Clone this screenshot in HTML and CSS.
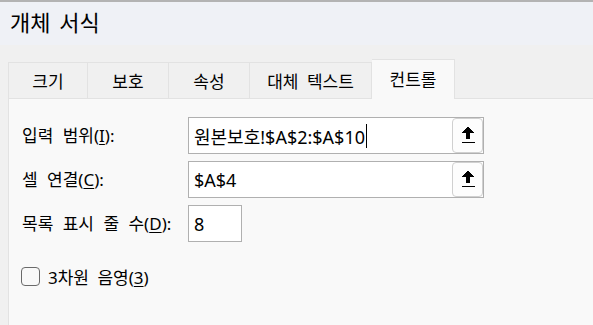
FILE: index.html
```html
<!DOCTYPE html>
<html lang="ko">
<head>
<meta charset="utf-8">
<link rel="stylesheet" href="styles.css">
</head>
<body>
<div class="topbar"></div>
<div class="titlebar">개체 서식</div>
<div class="dialog">
  <div class="tabs">
    <div class="tab t1">크기</div>
    <div class="tab t2">보호</div>
    <div class="tab t3">속성</div>
    <div class="tab t4">대체 텍스트</div>
    <div class="tab active">컨트롤</div>
  </div>
  <div class="panel">
    <div class="form">
      <div class="label">입력 범위(<u>I</u>):</div>
      <div class="field wide"><span class="value">원본보호!$A$2:$A$10<span class="caret"></span></span>
        <span class="btn"><svg class="arrow" width="14" height="18" viewBox="0 0 14 18"><path d="M7 0 L13.5 7 L9 7 L9 13 L5 13 L5 7 L0.5 7 Z" fill="#000"/><rect x="0.5" y="16" width="13" height="1.2" fill="#000"/></svg></span>
      </div>
      <div class="label">셀 연결(<u>C</u>):</div>
      <div class="field wide"><span class="value">$A$4</span>
        <span class="btn"><svg class="arrow" width="14" height="18" viewBox="0 0 14 18"><path d="M7 0 L13.5 7 L9 7 L9 13 L5 13 L5 7 L0.5 7 Z" fill="#000"/><rect x="0.5" y="16" width="13" height="1.2" fill="#000"/></svg></span>
      </div>
      <div class="label">목록 표시 줄 수(<u>D</u>):</div>
      <div class="field small"><span class="value">8</span></div>
    </div>
    <label class="check"><span class="box"></span><span>3차원 음영(<u>3</u>)</span></label>
  </div>
</div>
</body>
</html>
```
FILE: styles.css
```css
html, body {
  margin: 0;
  padding: 0;
  height: 100%;
  overflow: hidden;
}
body {
  font-family: "Noto Sans", "Noto Sans CJK KR", sans-serif;
  color: #000;
  background: #f0f0f0;
  width: 593px;
  height: 325px;
  display: flex;
  flex-direction: column;
}
.topbar {
  height: 2px;
  background: #b3b3b3;
  flex: none;
}
.titlebar {
  height: 43px;
  flex: none;
  background: #eff1f6;
  font-size: 22px;
  word-spacing: 3px;
  line-height: 40px;
  padding-left: 10px;
  box-sizing: border-box;
}
.dialog {
  flex: 1;
  background: #f0f0f0;
  padding: 14px 0 0 8px;
  display: flex;
  flex-direction: column;
}
.tabs {
  display: flex;
  align-items: flex-end;
  height: 39px;
  position: relative;
  z-index: 1;
}
.tab {
  height: 36px;
  box-sizing: border-box;
  border: 1px solid #e2e2e2;
  border-right: none;
  border-bottom: none;
  display: flex;
  align-items: center;
  justify-content: center;
  font-size: 17px;
  word-spacing: 4px;
  background: #f0f0f0;
  padding-bottom: 1px;
  white-space: nowrap;
}
.t1 { width: 79px; }
.t2 { width: 81px; }
.t3 { width: 81px; }
.t4 { width: 123px; border-right: 1px solid #e2e2e2; }
.active {
  width: 83px;
  height: 40px;
  margin-bottom: -1px;
  background: #f9f9f9;
  border: 1px solid #e2e2e2;
  border-left: none;
  border-bottom: none;
  padding-bottom: 2px;
}
.panel {
  flex: 1;
  background: #f9f9f9;
  border-top: 1px solid #e2e2e2;
  border-left: 1px solid #e2e2e2;
  padding: 18px 0 0 13px;
}
.form {
  display: grid;
  grid-template-columns: 166px auto;
  row-gap: 7px;
  align-items: center;
}
.label {
  font-size: 17px;
  word-spacing: 5px;
  line-height: 20px;
  white-space: nowrap;
}
.field {
  height: 37px;
  box-sizing: border-box;
  border: 1px solid #b0b0b0;
  background: #fff;
  display: flex;
  align-items: center;
  justify-content: space-between;
}
.wide { width: 296px; }
.small { width: 54px; }
.value {
  font-size: 18px;
  padding-left: 5px;
  display: flex;
  align-items: center;
  white-space: nowrap;
}
.caret {
  display: inline-block;
  width: 1px;
  height: 24px;
  background: #000;
  margin-left: 1px;
}
.btn {
  width: 31px;
  height: 35px;
  box-sizing: border-box;
  border: 1px solid #d0d0d0;
  border-radius: 4px;
  background: #fdfdfd;
  display: flex;
  align-items: center;
  justify-content: center;
  padding-bottom: 1px;
}
.arrow {
  shape-rendering: crispEdges;
}
.check {
  display: flex;
  align-items: center;
  gap: 8px;
  margin-top: 22px;
  margin-left: -1px;
  font-size: 17px;
  word-spacing: 4px;
}
.box {
  width: 19px;
  height: 19px;
  box-sizing: border-box;
  border: 1px solid #6a6a6a;
  border-radius: 4px;
  background: #f9f9f9;
}
u { text-underline-offset: 2px; }
```
